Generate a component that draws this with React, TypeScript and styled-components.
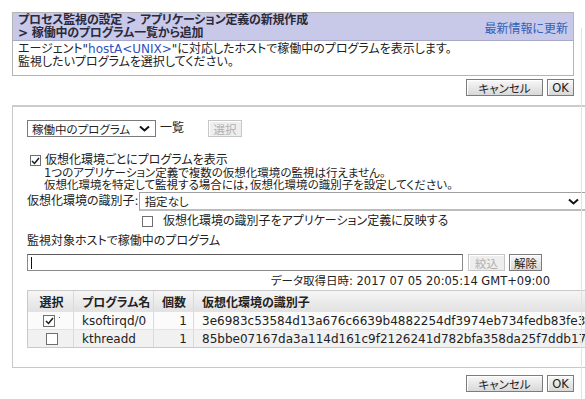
import * as React from "react";
import styled, { createGlobalStyle } from "styled-components";

const GlobalStyle = createGlobalStyle`
  html, body {
    margin: 0;
    padding: 0;
    background: #fff;
    overflow: hidden;
  }
  body {
    font-family: "DejaVu Sans", "Noto Sans CJK JP", sans-serif;
    font-size: 12px;
    color: #222;
    font-feature-settings: "palt";
  }
`;

const Page = styled.div`
  position: relative;
  width: 585px;
  height: 399px;
  overflow: hidden;
  box-sizing: border-box;
  padding: 12px 0 0 12px;
`;

const FrameEdge = styled.div`
  position: absolute;
  left: 581px;
  top: 28px;
  bottom: 0;
  width: 1px;
  background: #e2e2e2;
`;

const TopPanel = styled.div`
  width: 562px;
  border: 1px solid #b4b4b4;
  box-sizing: border-box;
`;

const TopHeader = styled.div`
  display: flex;
  justify-content: space-between;
  align-items: center;
  height: 27px;
  padding: 0 5px 0 5px;
  background: #c8c8e9;
  border-bottom: 1px solid #a8a8c8;
`;

const Title = styled.div`
  font-weight: bold;
  line-height: 13px;
  color: #2a2a3a;
  letter-spacing: -0.2px;
`;

const RefreshLink = styled.span`
  color: #2f62b8;
  margin-top: 2px;
`;

const TopBody = styled.div`
  height: 34px;
  padding: 2px 5px 0 5px;
  line-height: 13px;
  box-sizing: border-box;
`;

const Host = styled.span`
  color: #2f4fc0;
`;

const ButtonRow = styled.div<{ $width: number }>`
  display: flex;
  justify-content: flex-end;
  gap: 4px;
  width: ${(p) => p.$width}px;
  margin-top: 3px;
`;

const Button = styled.div<{ $w: number; $disabled?: boolean }>`
  width: ${(p) => p.$w}px;
  height: 17px;
  box-sizing: border-box;
  display: flex;
  align-items: center;
  justify-content: center;
  font-size: 11.5px;
  border: 1px solid ${(p) => (p.$disabled ? "#c6c6c6" : "#7c7c7c")};
  background: ${(p) =>
    p.$disabled
      ? "#eeeeee"
      : "linear-gradient(#f8f8f8, #e6e6e6 55%, #d8d8d8)"};
  color: ${(p) => (p.$disabled ? "#b0b0b0" : "#222")};
  box-shadow: inset 1px 1px 0 #ffffff;
`;

const MainPanel = styled.div`
  width: 640px;
  height: 263px;
  margin-top: 9px;
  box-sizing: border-box;
  border: 1px solid #c8c8c8;
  border-top: 2px solid #cccccc;
  padding: 13px 0 0 14px;
`;

const Row = styled.div<{ $mt?: number; $indent?: number }>`
  display: flex;
  align-items: center;
  margin-top: ${(p) => p.$mt ?? 0}px;
  padding-left: ${(p) => p.$indent ?? 0}px;
`;

const SelectBox = styled.div<{ $w: number }>`
  width: ${(p) => p.$w}px;
  height: 17px;
  box-sizing: border-box;
  border: 1px solid #7a7a7a;
  display: flex;
  align-items: center;
  justify-content: space-between;
  padding: 0 5px 0 4px;
  font-size: 11.5px;
  background: #fff;
`;

const Chevron = () => (
  <svg width="11" height="7" viewBox="0 0 11 7">
    <polyline
      points="1,1.5 5.5,5.5 10,1.5"
      fill="none"
      stroke="#111"
      strokeWidth="2"
    />
  </svg>
);

const Label = styled.span<{ $ml?: number }>`
  margin-left: ${(p) => p.$ml ?? 0}px;
  line-height: 13px;
`;

const Check = styled.span<{ $size?: number }>`
  width: ${(p) => p.$size ?? 11}px;
  height: ${(p) => p.$size ?? 11}px;
  box-sizing: border-box;
  border: 1px solid #6e6e6e;
  background: #fff;
  display: inline-flex;
  align-items: center;
  justify-content: center;
  flex-shrink: 0;
`;

const CheckBox: React.FC<{ checked?: boolean; size?: number }> = ({
  checked,
  size,
}) => (
  <Check $size={size}>
    {checked && (
      <svg width="9" height="8" viewBox="0 0 9 8">
        <polyline
          points="1,4 3.5,6.5 8,1"
          fill="none"
          stroke="#1a1a1a"
          strokeWidth="1.5"
        />
      </svg>
    )}
  </Check>
);

const Note = styled.div`
  padding-left: 17px;
  line-height: 12px;
  font-size: 11.5px;
`;

const IdentBox = styled.div`
  flex: 1;
  height: 16px;
  border-top: 1px solid #a0a0a0;
  border-left: 1px solid #a0a0a0;
  border-bottom: 2px solid #bdbdbd;
  display: flex;
  align-items: center;
  justify-content: space-between;
  padding: 0 0 0 5px;
  font-size: 11.5px;
`;

const IdentChevron = styled.span`
  display: flex;
  margin-right: 72px;
`;

const TextInput = styled.div`
  width: 436px;
  height: 17px;
  box-sizing: border-box;
  border: 1px solid #8a8a8a;
  border-top-color: #5a5a5a;
  display: flex;
  align-items: center;
  padding-left: 3px;
`;

const Caret = styled.span`
  width: 1px;
  height: 12px;
  background: #111;
`;

const Stamp = styled.div`
  width: 523px;
  text-align: right;
  margin-top: 3px;
  line-height: 14px;
  font-size: 11.5px;
`;

const Table = styled.div`
  margin-top: 2px;
  border: 1px solid #c9c9c9;
  border-right: none;
`;

const TRow = styled.div<{ $kind: "head" | "odd" | "even" }>`
  display: grid;
  grid-template-columns: 45px 80px 40px 1fr;
  height: ${(p) => (p.$kind === "head" ? 20 : 17)}px;
  background: ${(p) =>
    p.$kind === "head"
      ? "linear-gradient(#f6f6f6, #e2e2e2)"
      : p.$kind === "odd"
      ? "#fbfbfb"
      : "#f1f1f1"};
  border-top: ${(p) => (p.$kind === "head" ? "none" : "1px solid #e3e3e3")};
  font-weight: ${(p) => (p.$kind === "head" ? "bold" : "normal")};
`;

const Cell = styled.div<{ $align?: "left" | "center" | "right" }>`
  display: flex;
  align-items: center;
  justify-content: ${(p) =>
    p.$align === "center"
      ? "center"
      : p.$align === "right"
      ? "flex-end"
      : "flex-start"};
  padding: 0 6px 0 8px;
  border-left: 1px solid #dadada;
  white-space: nowrap;
  overflow: hidden;
  &:first-child {
    border-left: none;
  }
`;

const Dot = styled.span`
  width: 1px;
  height: 1px;
  background: #666;
  margin: -6px 0 0 4px;
`;

const rows = [
  {
    checked: true,
    name: "ksoftirqd/0",
    count: 1,
    id: "3e6983c53584d13a676c6639b4882254df3974eb734fedb83fe399a1",
  },
  {
    checked: false,
    name: "kthreadd",
    count: 1,
    id: "85bbe07167da3a114d161c9f2126241d782bfa358da25f7ddb17ce0a",
  },
];

export default function App() {
  return (
    <Page>
      <GlobalStyle />
      <FrameEdge />
      <TopPanel>
        <TopHeader>
          <Title>
            プロセス監視の設定 &gt; アプリケーション定義の新規作成
            <br />
            &gt; 稼働中のプログラム一覧から追加
          </Title>
          <RefreshLink>最新情報に更新</RefreshLink>
        </TopHeader>
        <TopBody>
          エージェント"<Host>hostA&lt;UNIX&gt;</Host>"に対応したホストで稼働中のプログラムを表示します。
          <br />
          監視したいプログラムを選択してください。
        </TopBody>
      </TopPanel>
      <ButtonRow $width={562}>
        <Button $w={77}>キャンセル</Button>
        <Button $w={27}>OK</Button>
      </ButtonRow>

      <MainPanel>
        <Row>
          <SelectBox $w={129}>
            稼働中のプログラム
            <Chevron />
          </SelectBox>
          <Label $ml={4}>一覧</Label>
          <Button $w={34} $disabled style={{ marginLeft: 24 }}>
            選択
          </Button>
        </Row>
        <Row $mt={17} $indent={3}>
          <CheckBox checked />
          <Label $ml={4}>仮想化環境ごとにプログラムを表示</Label>
        </Row>
        <Note>
          1つのアプリケーション定義で複数の仮想化環境の監視は行えません。
          <br />
          仮想化環境を特定して監視する場合には，仮想化環境の識別子を設定してください。
        </Note>
        <Row $mt={1}>
          <Label>仮想化環境の識別子:</Label>
          <IdentBox>
            指定なし
            <IdentChevron>
              <Chevron />
            </IdentChevron>
          </IdentBox>
        </Row>
        <Row $mt={4} $indent={115}>
          <CheckBox />
          <Label $ml={10}>仮想化環境の識別子をアプリケーション定義に反映する</Label>
        </Row>
        <Row $mt={7}>
          <Label>監視対象ホストで稼働中のプログラム</Label>
        </Row>
        <Row $mt={6}>
          <TextInput>
            <Caret />
          </TextInput>
          <Button $w={37} $disabled style={{ marginLeft: 5 }}>
            絞込
          </Button>
          <Button $w={33} style={{ marginLeft: 4 }}>
            解除
          </Button>
        </Row>
        <Stamp>データ取得日時: 2017 07 05 20:05:14 GMT+09:00</Stamp>
        <Table>
          <TRow $kind="head">
            <Cell $align="center">選択</Cell>
            <Cell>プログラム名</Cell>
            <Cell>個数</Cell>
            <Cell>仮想化環境の識別子</Cell>
          </TRow>
          {rows.map((r, i) => (
            <TRow key={r.name} $kind={i % 2 === 0 ? "odd" : "even"}>
              <Cell $align="center">
                <CheckBox checked={r.checked} size={12} />
                {r.checked ? <Dot /> : null}
              </Cell>
              <Cell>{r.name}</Cell>
              <Cell $align="right">{r.count}</Cell>
              <Cell>{r.id}</Cell>
            </TRow>
          ))}
        </Table>
      </MainPanel>
      <ButtonRow $width={562} style={{ marginTop: 7 }}>
        <Button $w={77}>キャンセル</Button>
        <Button $w={27}>OK</Button>
      </ButtonRow>
    </Page>
  );
}
